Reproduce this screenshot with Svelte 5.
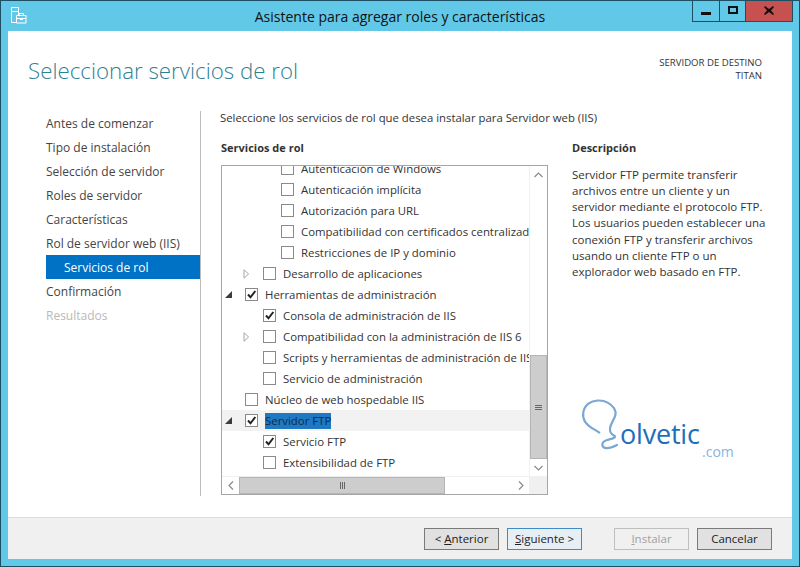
<script>
  const nav = [
    { t: 'Antes de comenzar' }, { t: 'Tipo de instalación' }, { t: 'Selección de servidor' },
    { t: 'Roles de servidor' }, { t: 'Características' }, { t: 'Rol de servidor web (IIS)' },
    { t: 'Servicios de rol', cls: 'active' }, { t: 'Confirmación' }, { t: 'Resultados', cls: 'off' }
  ];
  const rows = [
    { l: 3, t: 'Autenticación de Windows' },
    { l: 3, t: 'Autenticación implícita' },
    { l: 3, t: 'Autorización para URL' },
    { l: 3, t: 'Compatibilidad con certificados centralizados' },
    { l: 3, t: 'Restricciones de IP y dominio' },
    { l: 2, t: 'Desarrollo de aplicaciones', exp: 'closed' },
    { l: 1, t: 'Herramientas de administración', exp: 'open', c: true },
    { l: 2, t: 'Consola de administración de IIS', c: true },
    { l: 2, t: 'Compatibilidad con la administración de IIS 6', exp: 'closed' },
    { l: 2, t: 'Scripts y herramientas de administración de IIS' },
    { l: 2, t: 'Servicio de administración' },
    { l: 1, t: 'Núcleo de web hospedable IIS' },
    { l: 1, t: 'Servidor FTP', exp: 'open', c: true, sel: true },
    { l: 2, t: 'Servicio FTP', c: true },
    { l: 2, t: 'Extensibilidad de FTP' }
  ];
  const desc = [
    'Servidor FTP permite transferir', 'archivos entre un cliente y un', 'servidor mediante el protocolo FTP.',
    'Los usuarios pueden establecer una', 'conexión FTP y transferir archivos', 'usando un cliente FTP o un',
    'explorador web basado en FTP.'
  ];
</script>

<div class="win">
  <header class="titlebar">
    <svg class="appicon" width="17" height="17" viewBox="0 0 17 17" fill="none" stroke="#fff">
      <path d="M1.5 .5h7v15h-7z" fill="#62c8e8" />
      <path d="M1.5 4.5h7" />
      <path d="M6.5 8.5h9.5v7.5h-9.5z" fill="#62c8e8" />
      <path d="M9 8.500v-2h4.500v2M6.500 11.500h9.500" />
      <path d="M10 11h3v2h-3z" fill="#fff" stroke="none" />
    </svg>
    <div class="wintitle">Asistente para agregar roles y características</div>
    <div class="controls">
      <div class="ctl min"><span></span></div>
      <div class="ctl max"><span></span></div>
      <div class="ctl close">
        <svg width="10" height="9" viewBox="0 0 10 9"><path d="M1 0l4 3 4-3 1 1-3 3.500 3 3.500-1 1-4-3-4 3-1-1 3-3.500-3-3.500z" fill="#111" /></svg>
      </div>
    </div>
  </header>

  <div class="client">
    <div class="head">
      <h1>Seleccionar servicios de rol</h1>
      <div class="dest">SERVIDOR DE DESTINO<br />TITAN</div>
    </div>

    <div class="body">
      <nav class="nav">
        {#each nav as n}
          <div class="navitem {n.cls ?? ''}">{n.t}</div>
        {/each}
      </nav>

      <main class="main">
        <p class="intro">Seleccione los servicios de rol que desea instalar para Servidor web (IIS)</p>
        <div class="cols">
          <section class="left">
            <h2>Servicios de rol</h2>
            <div class="tree">
              <div class="treetop">
                <div class="list">
                  <div class="rows">
                    {#each rows as r}
                      <div class="row l{r.l}" class:sel={r.sel}>
                        <span class="exp">
                          {#if r.exp === 'closed'}
                            <svg width="7" height="10" viewBox="0 0 7 10"><path d="M1 .8v8.400l4.600-4.200z" fill="#fff" stroke="#a6a6a6" /></svg>
                          {:else if r.exp === 'open'}
                            <svg width="7" height="7" viewBox="0 0 7 7"><path d="M7 0v7h-7z" fill="#3c3c3c" /></svg>
                          {/if}
                        </span>
                        <span class="box">
                          {#if r.c}
                            <svg width="11" height="11" viewBox="0 0 11 11"><path d="M2 5.500l2.500 2.800 4.800-6.300" fill="none" stroke="#222" stroke-width="2" /></svg>
                          {/if}
                        </span>
                        <span class="label">{r.t}</span>
                      </div>
                    {/each}
                  </div>
                </div>
                <div class="vbar">
                  <div class="arrow"><svg width="9" height="6" viewBox="0 0 9 6"><path d="M.5 5l4-4 4 4" fill="none" stroke="#8a8a8a" stroke-width="1.200" /></svg></div>
                  <div class="vtrack"></div>
                  <div class="vthumb"><span></span><span></span><span></span></div>
                  <div class="arrow"><svg width="9" height="6" viewBox="0 0 9 6"><path d="M.5 1l4 4 4-4" fill="none" stroke="#8a8a8a" stroke-width="1.200" /></svg></div>
                </div>
              </div>
              <div class="hbar">
                <div class="arrow h"><svg width="6" height="9" viewBox="0 0 6 9"><path d="M5 .5l-4 4 4 4" fill="none" stroke="#8a8a8a" stroke-width="1.200" /></svg></div>
                <div class="hthumb"><span></span><span></span><span></span></div>
                <div class="htrack"></div>
                <div class="arrow h"><svg width="6" height="9" viewBox="0 0 6 9"><path d="M1 .5l4 4-4 4" fill="none" stroke="#8a8a8a" stroke-width="1.200" /></svg></div>
                <div class="corner"></div>
              </div>
            </div>
          </section>

          <section class="right">
            <h2>Descripción</h2>
            <div class="desc">
              {#each desc as d}<div>{d}</div>{/each}
            </div>
          </section>
        </div>
      </main>
    </div>

    <div class="logo">
      <svg width="40" height="53" viewBox="60 24 120 159" fill="none">
        <path d="M118 128C105 118 85 112 75 95 65 78 68 55 85 41 100 30 125 28 143 38 160 47 170 62 166 76 162 90 152 100 150 115 149 125 152 132 163 137 170 141 160 146 148 148 135 151 126 155 127 165 129 177 145 178 171 165" stroke="#7aa7d4" stroke-width="6.500" stroke-linecap="round" />
      </svg>
      <span class="brand">olvetic</span>
      <span class="com">.com</span>
    </div>

    <footer class="footer">
      <button class="btn"><span class="lt">&lt;</span> <u>A</u>nterior</button>
      <button class="btn next"><u>S</u>iguiente &gt;</button>
      <button class="btn dis gap"><u>I</u>nstalar</button>
      <button class="btn">Cancelar</button>
    </footer>
  </div>
</div>

<style>
  :global(body) { margin: 0; background: #62c8e8; }
  .win {
    width: 800px; height: 567px; box-sizing: border-box;
    display: flex; flex-direction: column;
    background: #62c8e8; border: 1px solid #1c4f64;
    font-family: "Open Sans", "Noto Sans", sans-serif;
    font-size: 11.5px; color: #333;
    overflow: hidden;
  }
  .titlebar { height: 30px; flex: none; display: flex; position: relative; }
  .appicon { position: absolute; left: 9px; top: 6px; }
  .wintitle {
    position: absolute; left: 0; right: 0; top: 6px; text-align: center;
    font-size: 14px; line-height: 20px; color: #111;
  }
  .controls { position: absolute; top: -1px; right: 6px; display: flex; height: 21px; border: 1px solid #1c4f64; border-top: 0; box-sizing: content-box; }
  .ctl { display: flex; align-items: center; justify-content: center; box-sizing: border-box; }
  .min { width: 27px; border-right: 1px solid #1c4f64; }
  .min span { width: 10px; height: 3px; background: #111; margin-top: 6px; }
  .max { width: 26px; border-right: 1px solid #1c4f64; }
  .max span { width: 6px; height: 4px; border: 2px solid #111; margin-top: -1px; }
  .close { width: 46px; background: #c75050; }

  .client {
    flex: 1; margin: 0 7px 7px 7px; background: #fff; position: relative;
    display: flex; flex-direction: column; min-height: 0;
  }
  .head { height: 78px; flex: none; display: flex; justify-content: space-between; }
  h1 {
    margin: 20px 0 0 20px; font-size: 22.3px; line-height: 40px; font-weight: 300; color: #2f7f95;
  }
  .dest { margin: 25px 30px 0 0; text-align: right; font-size: 9.6px; line-height: 13px; color: #333; }

  .body { flex: 1; display: flex; min-height: 0; }
  .nav { width: 192px; margin-left: 1px; margin-top: 2px; padding-top: 1px; height: 385px; border-right: 1px solid #bdbdbd; flex: none; box-sizing: border-box; font-size: 12px; }
  .navitem { height: 24px; line-height: 24px; margin-left: 37px; margin-right: 0; color: #444; }
  .navitem.active { background: #0072c6; color: #fff; padding-left: 18px; margin-top: -1px; margin-bottom: 1px; line-height: 26px; }
  .navitem.off { color: #b9b9b9; }

  .main { flex: 1; padding-left: 19px; min-width: 0; }
  .intro { margin: 0; padding-top: 1px; line-height: 16px; height: 29px; color: #333; font-size: 11.35px; }
  .cols { display: flex; }
  h2 { margin: 0; font-size: 11px; font-weight: 700; line-height: 16px; color: #333; height: 25px; padding-top: 1px; }
  .left { width: 327px; margin-left: 1px; flex: none; }
  .right { margin-left: 24px; }
  .right h2 { height: 27px; }
  .desc { line-height: 16.15px; color: #333; white-space: nowrap; }

  .tree { height: 330px; box-sizing: border-box; border: 1px solid #a6a6a6; display: flex; flex-direction: column; }
  .treetop { flex: 1; display: flex; min-height: 0; }
  .list { flex: 1; overflow: hidden; min-width: 0; font-size: 11.4px; }
  .rows { margin-top: -8px; }
  .row { height: 21px; display: flex; align-items: center; white-space: nowrap; }
  .row.sel { background: #f2f2f2; }
  .row.l2 { padding-left: 18px; }
  .row.l3 { padding-left: 36px; }
  .exp { width: 23px; flex: none; display: flex; justify-content: center; box-sizing: border-box; padding-right: 11px; }
  .box { width: 13px; height: 13px; border: 1px solid #8a8a8a; box-sizing: border-box; background: #fff; flex: none; display: flex; align-items: center; justify-content: center; }
  .label { margin-left: 7px; color: #333; line-height: 16px; }
  .row.sel .label { background: #1e78c2; color: #0c2d4a; }
  .vbar { width: 18px; flex: none; display: flex; flex-direction: column; border-left: 1px solid #f0f0f0; box-sizing: border-box; }
  .arrow { height: 17px; flex: none; display: flex; align-items: center; justify-content: center; background: #fff; }
  .arrow.h { height: auto; width: 17px; }
  .vtrack { flex: 1; background: #fff; }
  .vthumb { height: 104px; flex: none; background: #cdcdcd; border: 1px solid #b5b5b5; box-sizing: border-box; display: flex; flex-direction: column; align-items: center; justify-content: center; gap: 1px; }
  .vthumb span { width: 7px; height: 1px; background: #666; }
  .hbar { height: 17px; flex: none; display: flex; border-top: 1px solid #f0f0f0; }
  .hthumb { width: 206px; background: #cdcdcd; border: 1px solid #b5b5b5; box-sizing: border-box; display: flex; align-items: center; justify-content: center; gap: 1px; }
  .hthumb span { width: 1px; height: 7px; background: #666; }
  .htrack { flex: 1; background: #fff; }
  .corner { width: 18px; background: #f0f0f0; }

  .logo { position: absolute; left: 572px; top: 367px; width: 175px; height: 70px; }
  .logo svg { position: absolute; left: 0; top: 0; }
  .brand { position: absolute; left: 40px; top: 18px; font-size: 27px; line-height: 36px; color: #1d6fb8; letter-spacing: -.2px; }
  .com { position: absolute; left: 122px; top: 45px; font-size: 14px; line-height: 18px; color: #8ab4dc; }

  .footer {
    position: absolute; left: 0; right: 0; bottom: 0; height: 42px; box-sizing: border-box;
    background: #f0f0f0; border-top: 1px solid #dcdcdc;
    display: flex; justify-content: flex-end; align-items: flex-start; gap: 8px; padding: 10px 20px 0 0;
  }
  .btn {
    width: 75px; height: 22px; padding: 0; box-sizing: border-box;
    background: #e1e1e1; border: 1px solid #7a7a7a; color: #222;
    font: inherit; line-height: 18px; text-align: center;
  }
  .btn u { text-decoration: underline; }
  .next { background: #e7eef4; border-color: #3d8cc4; }
  .dis { background: #f0f0f0; border-color: #bfbfbf; color: #a0a0a0; }
  .gap { margin-left: 24px; }
</style>
